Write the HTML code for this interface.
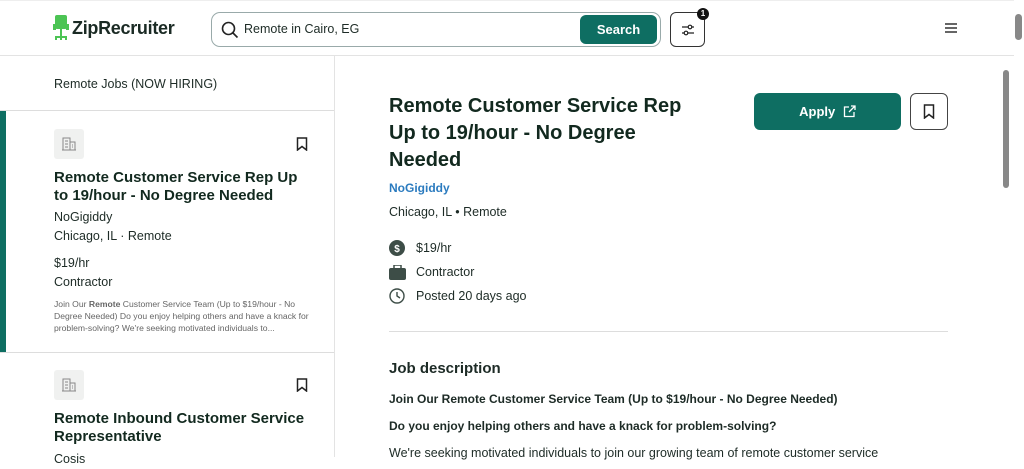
<!DOCTYPE html>
<html><head><meta charset="utf-8"><style>
*{box-sizing:border-box;margin:0;padding:0}
body{width:1024px;height:457px;overflow:hidden;background:#fff;font-family:"Liberation Sans",sans-serif;color:#1d2b26;position:relative}
.hdr{position:absolute;left:0;top:0;width:1014px;height:56px;border-bottom:1px solid #e3e3e3;border-top:1px solid #eee}
.logo{position:absolute;top:17px;font-size:18px;font-weight:bold;color:#1a2a24;letter-spacing:-0.3px}
.search{position:absolute;left:211px;top:11px;width:450px;height:35px;border:1px solid #9aa;border-radius:9px}
.search span{position:absolute;left:32px;top:9px;font-size:12.5px;color:#1d2b26}
.sbtn{position:absolute;right:3px;top:2px;width:77px;height:29px;background:#0e6e62;border-radius:6px;color:#fff;font-weight:bold;font-size:13px;text-align:center;line-height:29px}
.filt{position:absolute;left:670px;top:11px;width:35px;height:35px;border:1px solid #333;border-radius:6px}
.badge{position:absolute;left:697px;top:7px;width:12px;height:12px;border-radius:50%;background:#111;color:#fff;font-size:8px;font-weight:bold;text-align:center;line-height:12px}
.left{position:absolute;left:0;top:56px;width:335px;height:401px;border-right:1px solid #e3e3e3}
.lt{position:absolute;left:54px;top:21px;font-size:12.5px}
.sep{position:absolute;left:0;width:334px;height:1px;background:#ddd}
.card{position:absolute;left:54px;width:260px}
.ico{width:30px;height:30px;background:#f0f1f0;border-radius:3px;position:relative}
.ico svg{position:absolute;left:8px;top:8px}
.bm{position:absolute;right:8px;top:8px}
.ct{font-size:15px;font-weight:bold;line-height:18px;color:#12291f}
.c13{font-size:12.5px;line-height:19px}
.snip{font-size:8.6px;line-height:12px;color:#666}
.right{position:absolute;left:389px}
.scr{position:absolute;background:#888;border-radius:4px}
</style></head><body>
<div class="hdr">
 <svg style="position:absolute;left:53px;top:14px" width="16" height="27" viewBox="0 0 16 27"><rect x="2" y="0" width="12" height="14" rx="2" fill="#4cc454"/><rect x="0" y="9" width="3" height="6" fill="#4cc454"/><rect x="13" y="9" width="3" height="6" fill="#4cc454"/><path d="M8 14v8M2 22h12M3 22v3M13 22v3M8 22v3" stroke="#4cc454" stroke-width="2"/></svg>
 <div class="logo" style="left:72px">ZipRecruiter</div>
 <div class="search"><svg style="position:absolute;left:9px;top:8px" width="18" height="18" viewBox="0 0 18 18"><circle cx="7.5" cy="7.5" r="6" fill="none" stroke="#222" stroke-width="1.6"/><path d="M12 12l4.5 4.5" stroke="#222" stroke-width="1.6"/></svg><span>Remote in Cairo, EG</span><div class="sbtn">Search</div></div>
 <div class="filt"><svg style="position:absolute;left:10px;top:11px" width="14" height="12" viewBox="0 0 14 12"><path d="M1 3h12M1 9h12" stroke="#222" stroke-width="1.3"/><circle cx="9" cy="3" r="1.8" fill="#fff" stroke="#222" stroke-width="1.2"/><circle cx="5" cy="9" r="1.8" fill="#fff" stroke="#222" stroke-width="1.2"/></svg></div>
 <div class="badge">1</div>
 <svg style="position:absolute;left:945px;top:22px" width="12" height="10" viewBox="0 0 12 10"><path d="M0 1h12M0 5h12M0 9h12" stroke="#333" stroke-width="1.4"/></svg>
</div>
<div class="scr" style="left:1015px;top:14px;width:7px;height:26px"></div>
<div class="scr" style="left:1003px;top:70px;width:6px;height:118px"></div>
<div class="left">
 <div class="lt">Remote Jobs (NOW HIRING)</div>
 <div class="sep" style="top:54px"></div>
 <div style="position:absolute;left:0;top:55px;width:6px;height:241px;background:#0e6e62"></div>
 <div class="card" style="top:73px">
  <div class="ico"><svg width="14" height="14" viewBox="0 0 14 14"><path d="M1 13V1h7v12M8 5h5v8M3 4h3M3 7h3M3 10h3M10 8h1M10 10h1M0 13h14" fill="none" stroke="#888" stroke-width="1"/></svg></div>
  <svg class="bm" width="12" height="14" viewBox="0 0 12 14" style="right:6px"><path d="M1.5 1h9v12L6 9.5 1.5 13z" fill="none" stroke="#222" stroke-width="1.5"/></svg>
  <div class="ct" style="margin-top:10px">Remote Customer Service Rep Up to 19/hour - No Degree Needed</div>
  <div class="c13" style="margin-top:3px">NoGigiddy</div>
  <div class="c13">Chicago, IL · Remote</div>
  <div class="c13" style="margin-top:8px">$19/hr</div>
  <div class="c13">Contractor</div>
  <div class="snip" style="margin-top:6px">Join Our <b>Remote</b> Customer Service Team (Up to $19/hour - No Degree Needed) Do you enjoy helping others and have a knack for problem-solving? We're seeking motivated individuals to...</div>
 </div>
 <div class="sep" style="top:296px"></div>
 <div class="card" style="top:314px">
  <div class="ico"><svg width="14" height="14" viewBox="0 0 14 14"><path d="M1 13V1h7v12M8 5h5v8M3 4h3M3 7h3M3 10h3M10 8h1M10 10h1M0 13h14" fill="none" stroke="#888" stroke-width="1"/></svg></div>
  <svg class="bm" width="12" height="14" viewBox="0 0 12 14" style="right:6px"><path d="M1.5 1h9v12L6 9.5 1.5 13z" fill="none" stroke="#222" stroke-width="1.5"/></svg>
  <div class="ct" style="margin-top:10px">Remote Inbound Customer Service Representative</div>
  <div class="c13" style="margin-top:4px">Cosis</div>
 </div>
</div>
<div class="right" style="top:93px;width:315px;font-size:20px;font-weight:bold;line-height:27px;color:#12291f">Remote Customer Service Rep Up to 19/hour - No Degree Needed</div>
<div style="position:absolute;left:754px;top:93px;width:147px;height:37px;background:#0e6e62;border-radius:6px;color:#fff;font-weight:bold;font-size:13px;line-height:37px;text-align:center">Apply <svg style="vertical-align:-2px;margin-left:4px" width="13" height="13" viewBox="0 0 13 13"><path d="M6 2H1.5v9.5H11V7M8 1h4v4M12 1L6 7" fill="none" stroke="#fff" stroke-width="1.3"/></svg></div>
<div style="position:absolute;left:910px;top:93px;width:38px;height:37px;border:1px solid #444;border-radius:6px"><svg style="position:absolute;left:12px;top:10px" width="12" height="15" viewBox="0 0 12 15"><path d="M1.5 1h9v13L6 10.5 1.5 14z" fill="none" stroke="#222" stroke-width="1.5"/></svg></div>
<div class="right" style="top:181px;font-size:12px;font-weight:bold;color:#2b7bbf">NoGigiddy</div>
<div class="right" style="top:205px;font-size:12.5px">Chicago, IL • Remote</div>
<svg class="right" style="top:240px" width="16" height="16"><circle cx="8" cy="8" r="8" fill="#3d4d47"/><text x="8" y="12" font-size="10" font-weight="bold" fill="#fff" text-anchor="middle" font-family="Liberation Sans">$</text></svg>
<svg class="right" style="top:265px" width="17" height="15"><rect x="0" y="3" width="17" height="12" rx="2" fill="#3d4d47"/><rect x="5" y="0" width="7" height="4" fill="none" stroke="#3d4d47" stroke-width="1.5"/></svg>
<svg class="right" style="top:288px" width="16" height="16"><circle cx="8" cy="8" r="7" fill="none" stroke="#3d4d47" stroke-width="1.4"/><path d="M8 4v4l3 2" fill="none" stroke="#3d4d47" stroke-width="1.4"/></svg>
<div style="position:absolute;left:416px;top:241px;font-size:12.5px">$19/hr</div>
<div style="position:absolute;left:416px;top:265px;font-size:12.5px">Contractor</div>
<div style="position:absolute;left:416px;top:289px;font-size:12.5px">Posted 20 days ago</div>
<div style="position:absolute;left:389px;top:331px;width:559px;height:1px;background:#ddd"></div>
<div class="right" style="top:360px;font-size:15px;font-weight:bold">Job description</div>
<div class="right" style="top:392px;font-size:12px;font-weight:bold">Join Our Remote Customer Service Team (Up to $19/hour - No Degree Needed)</div>
<div class="right" style="top:419px;font-size:12px;font-weight:bold">Do you enjoy helping others and have a knack for problem-solving?</div>
<div class="right" style="top:446px;font-size:12.5px">We're seeking motivated individuals to join our growing team of remote customer service</div>
</body></html>
